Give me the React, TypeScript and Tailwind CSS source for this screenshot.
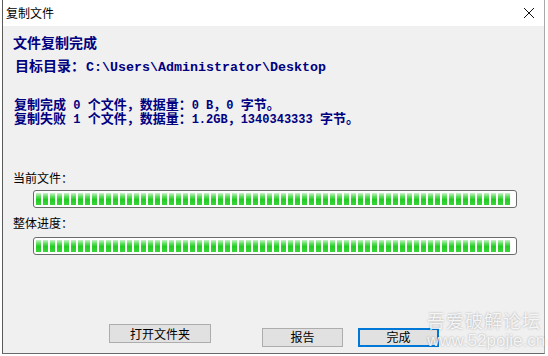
import React from "react";

const cjk = "font-['Noto_Sans_CJK_SC',sans-serif]";
const mono = "font-['Liberation_Mono','Noto_Sans_CJK_SC',monospace]";

// ascii bits of the navy lines, fixed width like the original
const M = ({ children, big }: { children: React.ReactNode; big?: boolean }) => (
  <span className={`${mono} ${big ? "text-[13.33px]" : "text-[12px]"} leading-[13px] font-bold`}>{children}</span>
);

const Progress = () => (
  <div className="ml-[20px] w-[484px] h-[18px] border border-[#6b6b6b] rounded-[3px] bg-white p-[2px] flex gap-[2px] overflow-hidden">
    {Array.from({ length: 68 }).map((_, i) => (
      <div
        key={i}
        className="w-[5px] h-full shrink-0 bg-[linear-gradient(to_bottom,#c8f3c8_0%,#5ede5e_30%,#22cc22_55%,#3ad63a_100%)]"
      />
    ))}
  </div>
);

const Btn = ({ label, w, active }: { label: string; w: string; active?: boolean }) => (
  <button
    className={`${w} h-[19px] bg-[#e1e1e1] text-[12px] leading-none text-black ${cjk} ${
      active ? "border-2 border-[#0078d7]" : "border border-[#adadad]"
    }`}
  >
    {label}
  </button>
);

export default function App() {
  return (
    <div className="w-[548px] h-[356px] bg-white overflow-hidden relative">
      <div className="ml-[2px] w-[543px] h-[354px] border-l border-r border-b border-l-[#5a5a5a] border-r-[#a8a8a8] border-b-[#6a6a6a] flex flex-col">
        {/* title bar */}
        <div className="h-[26px] bg-white flex items-center justify-between shrink-0">
          <span className={`${cjk} text-[12px] text-black pl-[3px]`}>复制文件</span>
          <svg width="12" height="12" viewBox="0 0 12 12" className="mr-[9px]">
            <path d="M1 1 L11 11 M11 1 L1 11" stroke="#111" strokeWidth="1" fill="none" />
          </svg>
        </div>

        {/* body */}
        <div className="flex-1 bg-[#f0f0f0] pl-[10px] flex flex-col text-[#000080]">
          <div className={`${cjk} mt-[8px] h-[16px] text-[14px] leading-[16px] font-bold`}>文件复制完成</div>
          <div className={`${cjk} mt-[7px] h-[16px] text-[14px] leading-[16px] font-bold pl-[2px] [font-feature-settings:'halt']`}>
            目标目录：<M big> C:\Users\Administrator\Desktop</M>
          </div>

          <div className={`${cjk} mt-[24px] text-[13px] leading-[14px] font-bold pl-[1px]`}>
            <div className="h-[14px] whitespace-nowrap">
              复制完成<M> 0 </M>个文件，数据量：<M>0 B</M>，<M>0 </M>字节。
            </div>
            <div className="h-[14px] whitespace-nowrap">
              复制失败<M> 1 </M>个文件，数据量：<M>1.2GB</M>，<M>1340343333 </M>字节。
            </div>
          </div>

          <div className={`${cjk} mt-[45px] h-[16px] text-[12px] leading-[16px] text-black`}>当前文件：</div>
          <div className="mt-[4px]">
            <Progress />
          </div>
          <div className={`${cjk} mt-[7px] h-[16px] text-[12px] leading-[16px] text-black`}>整体进度：</div>
          <div className="mt-[6px]">
            <Progress />
          </div>

          <div className="mt-[69px] ml-[96px] flex">
            <Btn label="打开文件夹" w="w-[102px]" />
            <div className="ml-[51px]">
              <Btn label="报告" w="w-[81px]" />
            </div>
            <div className="ml-[15px]">
              <Btn label="完成" w="w-[81px]" active />
            </div>
          </div>
        </div>
      </div>

      {/* forum watermark over the corner */}
      <div className="absolute left-[427px] top-[309px] flex flex-col pointer-events-none text-white/85 [text-shadow:0_0_2px_rgba(0,0,0,0.35)]">
        <span className={`${cjk} text-[18px] leading-[22px] tracking-[1px]`}>吾爱破解论坛</span>
        <span className="font-['Liberation_Sans',sans-serif] text-[17px] leading-[20px]">www.52pojie.cn</span>
      </div>
    </div>
  );
}
